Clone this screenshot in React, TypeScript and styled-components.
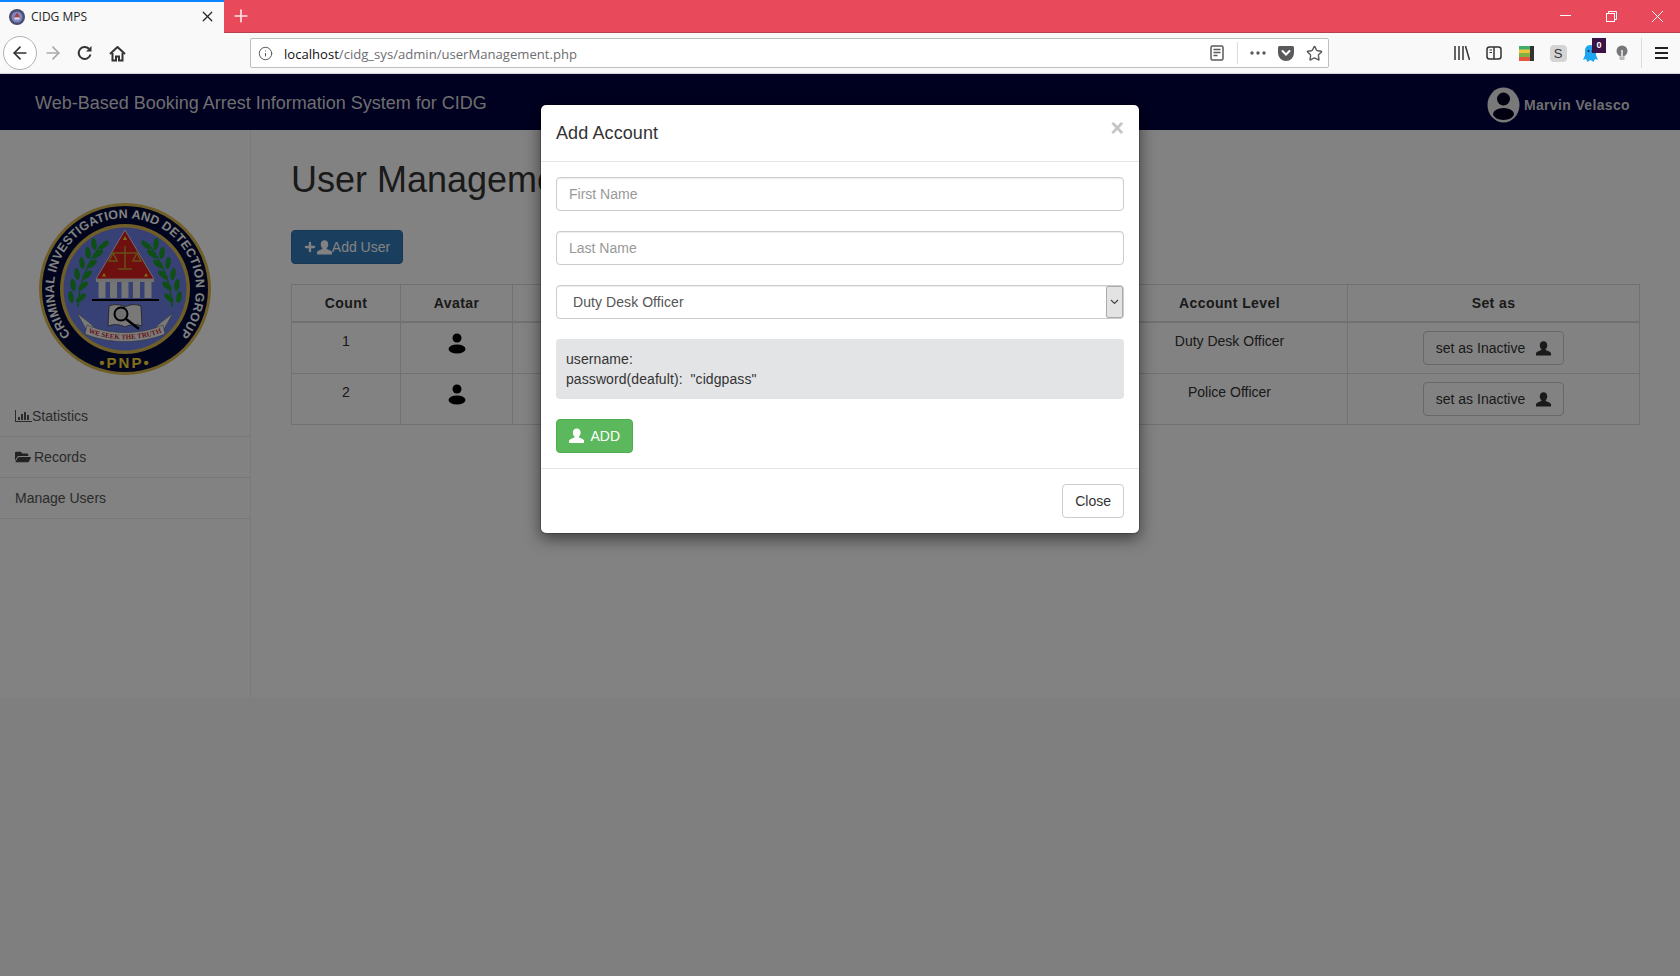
import React from "react";
import styled, { createGlobalStyle } from "styled-components";
import { ArrowLeft, ArrowRight, Info, Star, X, Plus } from "lucide-react";
import { FaFolderOpen } from "react-icons/fa";

const GlobalStyle = createGlobalStyle`
  html, body {
    margin: 0;
    padding: 0;
    height: 100%;
  }
  body {
    font-family: "Liberation Sans", Arial, sans-serif;
    font-size: 14px;
    line-height: 20px;
    color: #333;
    background: #fff;
  }
  * {
    box-sizing: border-box;
  }
`;

const Frame = styled.div`
  width: 1680px;
  height: 976px;
  display: flex;
  flex-direction: column;
  overflow: hidden;
`;

/* Browser chrome */
const TabStrip = styled.div`
  height: 33px;
  display: flex;
  align-items: stretch;
  background: #e84a5b;
  border-bottom: 1px solid #b8404e;
`;

const Tab = styled.div`
  width: 224px;
  height: 33px;
  display: flex;
  align-items: center;
  padding: 0 8px 2px 9px;
  gap: 6px;
  background: #f9f9fa;
  border-top: 2px solid #0a84ff;
  font-family: "Open Sans", sans-serif;
  font-size: 12px;
  color: #222;
`;

const TabTitle = styled.span`
  flex: 1;
`;

const NewTab = styled.div`
  width: 34px;
  display: flex;
  align-items: center;
  justify-content: center;
  color: #fde3e6;
`;

const WindowControls = styled.div`
  margin-left: auto;
  display: flex;
`;

const WindowButton = styled.div`
  width: 46px;
  display: flex;
  align-items: center;
  justify-content: center;
`;

const Toolbar = styled.div`
  height: 41px;
  display: flex;
  align-items: center;
  padding: 0 3px;
  background: #f9f9fa;
  border-bottom: 1px solid #e0e0e2;
`;

const BackButton = styled.div`
  width: 34px;
  height: 34px;
  border: 1px solid #b1b1b3;
  border-radius: 50%;
  background: #fff;
  display: flex;
  align-items: center;
  justify-content: center;
  color: #303033;
`;

const Slot = styled.div<{ $w?: number; $color?: string }>`
  width: ${(p) => p.$w ?? 32}px;
  height: 32px;
  position: relative;
  display: flex;
  align-items: center;
  justify-content: center;
  color: ${(p) => p.$color ?? "#333"};
`;

const UrlBar = styled.div`
  width: 1079px;
  height: 30px;
  margin-left: 117px;
  display: flex;
  align-items: center;
  background: #fff;
  border: 1px solid #bebebf;
  border-radius: 2px;
  padding-left: 7px;
  color: #5a5a5c;
`;

const UrlText = styled.div`
  flex: 1;
  margin: 1px 0 0 11px;
  font-family: "Open Sans", sans-serif;
  font-size: 13.1px;
  color: #6d6d70;
  white-space: nowrap;
`;

const UrlHost = styled.span`
  color: #111;
`;

const Divider = styled.div<{ $h: number; $mx: number }>`
  width: 1px;
  height: ${(p) => p.$h}px;
  margin: 0 ${(p) => p.$mx}px;
  background: #dcdcde;
`;

const RightTools = styled.div`
  margin-left: 117px;
  display: flex;
  align-items: center;
`;

const Badge = styled.span`
  position: absolute;
  top: 1px;
  right: 0;
  width: 14px;
  height: 15px;
  background: #3a1245;
  color: #fff;
  font-family: "Liberation Sans", sans-serif;
  font-size: 9px;
  font-weight: 700;
  line-height: 14px;
  text-align: center;
`;

const SBox = styled.div`
  width: 17px;
  height: 17px;
  border-radius: 4px;
  background: #d4d4d5;
  color: #333;
  font-size: 13px;
  line-height: 17px;
  text-align: center;
`;

/* Page */
const Viewport = styled.div`
  position: relative;
  flex: 1;
  background: #f9f9f9;
`;

const Navbar = styled.header`
  height: 56px;
  display: flex;
  align-items: center;
  justify-content: space-between;
  padding: 0 50px 0 35px;
  background: #000040;
  box-shadow: 0 1px 3px rgba(0, 0, 0, 0.3);
`;

const Brand = styled.div`
  font-size: 18px;
  color: #d8d8d8;
  margin-top: 2px;
`;

const UserInfo = styled.div`
  display: flex;
  align-items: center;
  gap: 4px;
  margin-top: 6px;
  font-weight: 700;
  font-size: 14px;
  letter-spacing: 0.35px;
  color: #d8d8d8;
`;

const Body = styled.div`
  height: 568px;
  display: flex;
  background: #fff;
`;

const Sidebar = styled.aside`
  width: 251px;
  flex: none;
  border-right: 1px solid #eee;
`;

const LogoWrap = styled.div`
  display: flex;
  justify-content: center;
  padding: 73px 0 21px;
`;

const SideItem = styled.div<{ $gap?: number }>`
  height: 41px;
  padding: 10px 15px;
  display: flex;
  align-items: center;
  gap: ${(p) => p.$gap ?? 0}px;
  border-bottom: 1px solid #e7e7e7;
  color: #555;
`;

const Main = styled.main`
  flex: 1;
  padding: 30px 41px 0 40px;
`;

const Title = styled.h1`
  margin: 0 0 30px;
  font-size: 36px;
  line-height: 40px;
  font-weight: 500;
  color: #333;
`;

const PrimaryButton = styled.button`
  height: 34px;
  width: 112px;
  display: flex;
  align-items: center;
  justify-content: center;
  padding: 0 1px 0 0;
  margin-bottom: 20px;
  border: 1px solid #2e6da4;
  border-radius: 4px;
  background: #337ab7;
  color: #fff;
  font: inherit;
`;

const Table = styled.table`
  width: 1348px;
  table-layout: fixed;
  border-collapse: collapse;
`;

const Th = styled.th<{ $w: number }>`
  width: ${(p) => p.$w}px;
  padding: 8px;
  border: 1px solid #ddd;
  border-bottom-width: 2px;
  text-align: center;
  letter-spacing: 0.4px;
`;

const Td = styled.td`
  height: 51px;
  padding: 8px;
  border: 1px solid #ddd;
  text-align: center;
  vertical-align: top;
`;

const DefaultButton = styled.button`
  height: 34px;
  display: inline-flex;
  align-items: center;
  vertical-align: top;
  gap: 11px;
  padding: 0 12px;
  border: 1px solid #ccc;
  border-radius: 4px;
  background: #fff;
  color: #333;
  font: inherit;
`;

/* Modal */
const Backdrop = styled.div`
  position: absolute;
  inset: 0;
  display: flex;
  justify-content: center;
  align-items: flex-start;
  padding-top: 30px;
  background: rgba(0, 0, 0, 0.49);
`;

const Modal = styled.div`
  width: 600px;
  background: #fff;
  border: 1px solid rgba(0, 0, 0, 0.2);
  border-radius: 6px;
  background-clip: padding-box;
  box-shadow: 0 5px 15px rgba(0, 0, 0, 0.5);
`;

const ModalHeader = styled.div`
  height: 57px;
  padding: 15px;
  display: flex;
  justify-content: space-between;
  border-bottom: 1px solid #e5e5e5;
`;

const ModalTitle = styled.h4`
  margin: 0;
  font-size: 18px;
  line-height: 26px;
  font-weight: 500;
  letter-spacing: 0.1px;
  color: #333;
`;

const CloseX = styled.span`
  margin-top: -2px;
  font-size: 23px;
  font-weight: 700;
  line-height: 21px;
  color: #c4c4c4;
`;

const ModalBody = styled.div`
  padding: 15px;
  display: flex;
  flex-direction: column;
  align-items: flex-start;
  gap: 20px;
`;

const Input = styled.input`
  width: 100%;
  height: 34px;
  padding: 6px 12px;
  border: 1px solid #ccc;
  border-radius: 4px;
  background: #fff;
  box-shadow: inset 0 1px 1px rgba(0, 0, 0, 0.075);
  font: inherit;
  color: #555;
  outline: none;

  &::placeholder {
    color: #999;
    opacity: 1;
  }
`;

const SelectWrap = styled.div`
  position: relative;
  width: 100%;
`;

const Select = styled.select`
  width: 100%;
  height: 34px;
  padding: 6px 12px 6px 16px;
  border: 1px solid #ccc;
  border-radius: 4px;
  background: #fff;
  box-shadow: inset 0 1px 1px rgba(0, 0, 0, 0.075);
  appearance: none;
  font: inherit;
  letter-spacing: 0.07px;
  color: #555;
  outline: none;
`;

const SelectArrow = styled.span`
  position: absolute;
  top: 1px;
  right: 1px;
  width: 17px;
  height: 32px;
  display: flex;
  align-items: center;
  justify-content: center;
  border: 1px solid #ababab;
  border-radius: 2px;
  background: #e3e3e3;
  pointer-events: none;
`;

const Well = styled.div`
  width: 100%;
  height: 60px;
  padding: 10px;
  border-radius: 4px;
  background: #e3e4e6;
  color: #333;
  letter-spacing: 0.08px;
`;

const SuccessButton = styled.button`
  height: 34px;
  width: 77px;
  display: flex;
  align-items: center;
  gap: 6px;
  padding: 0 12px;
  border: 1px solid #4cae4c;
  border-radius: 4px;
  background: #5cb85c;
  color: #fff;
  font: inherit;
`;

const ModalFooter = styled.div`
  padding: 15px;
  display: flex;
  justify-content: flex-end;
  border-top: 1px solid #e5e5e5;
`;

const CloseButton = styled.button`
  height: 34px;
  padding: 0 12px;
  border: 1px solid #ccc;
  border-radius: 4px;
  background: #fff;
  color: #333;
  font: inherit;
`;

/* Drawings */
const GlyphUser = ({ size = 14, color = "currentColor" }: { size?: number; color?: string }) => (
  <svg width={size} height={size} viewBox="0 0 24 24" fill={color}>
    <path d="M12 0.5c-4 0-6 3-6 6.500 0 2.400 1 4.500 2.600 5.800v1.200c0 1.200-6.600 1.800-8.600 5.400V23h24v-3.600c-2-3.600-8.600-4.200-8.600-5.400v-1.200C17 11.500 18 9.400 18 7c0-3.500-2-6.500-6-6.500z" />
  </svg>
);

const AvatarGlyph = () => (
  <svg width="20" height="22" viewBox="0 0 20 22" fill="#000" style={{ display: "block", margin: "2px auto 0" }}>
    <circle cx="10" cy="5" r="4.500" />
    <ellipse cx="10" cy="16" rx="8.500" ry="4.500" />
  </svg>
);

const NavAvatar = () => (
  <svg width="33" height="36" viewBox="0 0 33 36">
    <ellipse cx="16.500" cy="18" rx="16" ry="17.500" fill="#eee" />
    <circle cx="16.500" cy="12" r="6.500" fill="#000020" />
    <ellipse cx="16.500" cy="27" rx="10.500" ry="6" fill="#000020" />
  </svg>
);

const ChartIcon = () => (
  <svg width="17" height="14" viewBox="0 0 17 14" fill="#555">
    <path d="M0 1h1v11h16v1H0z" />
    <path d="M3 8h2v3H3zM6 5h2v6H6zM9 3h2v8H9zM12 6h2v5h-2z" />
  </svg>
);

const ReloadIcon = () => (
  <svg width="16" height="16" viewBox="0 0 16 16" fill="none" stroke="#333" strokeWidth="2">
    <path d="M13.500 9.500A6 6 0 1 1 12 3.800" />
    <path d="M14.500 1v5.500H9" fill="#333" stroke="none" />
  </svg>
);

const HomeIcon = () => (
  <svg width="17" height="17" viewBox="0 0 17 17" fill="none" stroke="#333" strokeWidth="2">
    <path d="M1 9l7.500-7 7.500 7" strokeLinejoin="round" />
    <path d="M3.500 8v7.500h3.500v-4h3v4h3.500V8" />
  </svg>
);

const ReaderIcon = () => (
  <svg width="14" height="16" viewBox="0 0 14 16" fill="none" stroke="#5a5a5c" strokeWidth="1.500">
    <rect x="1" y="1" width="12" height="14" rx="1.500" />
    <path d="M3.500 4.500h7M3.500 7.500h7M3.500 10.500h4" />
  </svg>
);

const DotsIcon = () => (
  <svg width="16" height="4" viewBox="0 0 16 4" fill="#5a5a5c">
    <circle cx="2" cy="2" r="1.700" />
    <circle cx="8" cy="2" r="1.700" />
    <circle cx="14" cy="2" r="1.700" />
  </svg>
);

const PocketIcon = () => (
  <svg width="16" height="15" viewBox="0 0 16 15">
    <path d="M1.500 0h13A1.500 1.500 0 0 1 16 1.500V7a8 8 0 0 1-16 0V1.500A1.500 1.500 0 0 1 1.500 0z" fill="#5a5a5c" />
    <path d="M4.500 5L8 8.500 11.500 5" fill="none" stroke="#fff" strokeWidth="2" strokeLinecap="round" />
  </svg>
);

const LibraryIcon = () => (
  <svg width="16" height="14" viewBox="0 0 16 14" fill="none" stroke="#333" strokeWidth="1.500">
    <path d="M1 0v14M5 0v14M9 0v14M11.500 0l4 14" />
  </svg>
);

const SidebarIcon = () => (
  <svg width="16" height="14" viewBox="0 0 16 14" fill="none" stroke="#333" strokeWidth="1.500">
    <rect x="1" y="1" width="14" height="12" rx="2.500" />
    <path d="M8 1v12" />
    <path d="M3.500 4h2.500M3.500 6.500h2.500" strokeWidth="1" />
  </svg>
);

const StackIcon = () => (
  <svg width="15" height="15" viewBox="0 0 15 15">
    <rect width="12" height="4" fill="#3fae6a" />
    <rect y="3.500" width="12" height="4" fill="#f0c33c" />
    <rect y="7" width="12" height="4" fill="#7cb342" />
    <rect y="11" width="12" height="4" fill="#e8553e" />
    <rect x="11" width="4" height="15" fill="#333" />
  </svg>
);

const GhostIcon = () => (
  <svg width="15" height="17" viewBox="0 0 15 17">
    <path d="M7.500 0C3.500 0 2 3 2 6v4l-2 5 3-1 1.500 3 3-2 3 2 1.500-3 3 1-2-5V6c0-3-1.500-6-5.500-6z" fill="#1ea5f2" />
    <circle cx="5.500" cy="6" r="1" fill="#123" />
    <circle cx="9.500" cy="6" r="1" fill="#123" />
  </svg>
);

const BulbIcon = () => (
  <svg width="12" height="16" viewBox="0 0 12 16">
    <circle cx="6" cy="6" r="5.500" fill="#77777a" />
    <rect x="3.500" y="11" width="5" height="4" fill="#b9b9bb" />
    <rect x="5" y="5" width="2" height="7" fill="#d5d5d6" />
  </svg>
);

const MenuIcon = () => (
  <svg width="13" height="12" viewBox="0 0 13 12" fill="#222">
    <rect width="13" height="2" />
    <rect y="5" width="13" height="2" />
    <rect y="10" width="13" height="2" />
  </svg>
);

const SmallSeal = () => (
  <svg width="16" height="16" viewBox="0 0 16 16">
    <circle cx="8" cy="8" r="8" fill="#4a4d6e" />
    <circle cx="8" cy="8" r="5.500" fill="#7d87c4" />
    <path d="M8 3.500l3 5H5z" fill="#b03a3a" />
    <rect x="5.500" y="8.500" width="5" height="2" fill="#ddd" />
  </svg>
);

// laurel stem points on the left branch, mirrored for the right one
const laurel = [
  [37, 96],
  [39, 84],
  [43, 73],
  [48, 62],
  [54, 52],
  [60, 43],
];

const Leaf = ({ x, y, angle }: { x: number; y: number; angle: number }) => (
  <ellipse cx={x} cy={y} rx="2.700" ry="6" fill="#1e9a2e" transform={`rotate(${angle} ${x} ${y})`} />
);

const Seal = () => (
  <svg width="172" height="172" viewBox="0 0 172 172" aria-label="CIDG seal">
    <defs>
      <path id="topArc" d="M42.300 142A71 71 0 1 1 129.700 142" />
      <path id="mottoArc" d="M46 128c24 11 56 11 80 0" fill="none" />
    </defs>
    <circle cx="86" cy="86" r="86" fill="#d9b84e" />
    <circle cx="86" cy="86" r="83" fill="#000a3a" />
    <circle cx="86" cy="86" r="65" fill="#d9b84e" />
    <circle cx="86" cy="86" r="61.500" fill="#6c80e6" />
    <text fontFamily="Liberation Sans, sans-serif" fontWeight="700" fontSize="12.400" fill="#fff" letterSpacing="0.200">
      <textPath href="#topArc" startOffset="50%" textAnchor="middle">
        CRIMINAL INVESTIGATION AND DETECTION GROUP
      </textPath>
    </text>
    <text x="86" y="165" textAnchor="middle" fontFamily="Liberation Sans, sans-serif" fontWeight="700" fontSize="15" fill="#fdd835" letterSpacing="2">
      •PNP•
    </text>
    {laurel.map(([x, y]) => (
      <g key={y}>
        <Leaf x={x - 5} y={y - 2} angle={-8} />
        <Leaf x={x + 5} y={y - 1} angle={50} />
        <Leaf x={172 - x + 5} y={y - 2} angle={8} />
        <Leaf x={172 - x - 5} y={y - 1} angle={-50} />
      </g>
    ))}
    <path d="M39 104C40 80 48 60 62 42M133 104C132 80 124 60 110 42" fill="none" stroke="#1e9a2e" strokeWidth="1.500" />
    <path d="M86 27l29 49H57z" fill="#d92020" stroke="#eee" strokeWidth="0.800" />
    <path d="M86 33l2 4h-4zM65 70l2 3.500h-4zM107 70l2 3.500h-4z" fill="#fdd835" />
    <path d="M86 43v22M74 50h24M74 50l-4 8h8zM98 50l-4 8h8zM79 66h14" stroke="#c79a2b" strokeWidth="1.500" fill="none" />
    <rect x="57" y="76" width="58" height="3" fill="#ddd" />
    {[63, 74.500, 86, 97.500, 109].map((x) => (
      <rect key={x} x={x - 3.500} y="79" width="7" height="16" fill="#e6e6e6" />
    ))}
    <rect x="53" y="96" width="67" height="2" fill="#000" />
    <path d="M70 103c5-2 11-2 16 1 5-3 11-3 16-1l1 20c-6-2-11-2-17 1-6-3-11-3-17-1z" fill="#eee" stroke="#555" />
    <circle cx="82" cy="111" r="6.500" fill="#dcdcdc" stroke="#000" strokeWidth="2" />
    <path d="M87 116l13 10" stroke="#000" strokeWidth="2.500" />
    <path d="M38 110l14 11 9 10-13-3zM134 110l-14 11-9 10 13-3z" fill="#eee" stroke="#555" strokeWidth="0.500" />
    <path d="M48 122c22 10 54 10 76 0l2 9c-24 10-56 10-80 0z" fill="#f4f4f4" stroke="#555" strokeWidth="0.500" />
    <text fontFamily="Liberation Serif, serif" fontWeight="700" fontSize="7" fill="#c62828">
      <textPath href="#mottoArc" startOffset="50%" textAnchor="middle">
        WE SEEK THE TRUTH
      </textPath>
    </text>
  </svg>
);

const users = [
  { count: 1, level: "Duty Desk Officer" },
  { count: 2, level: "Police Officer" },
];

const App: React.FC = () => {
  return (
    <Frame>
      <GlobalStyle />
      <TabStrip>
        <Tab>
          <SmallSeal />
          <TabTitle>CIDG MPS</TabTitle>
          <X size={17} strokeWidth={1.8} color="#222" />
        </Tab>
        <NewTab>
          <Plus size={20} strokeWidth={2} />
        </NewTab>
        <WindowControls>
          <WindowButton>
            <svg width="11" height="2" viewBox="0 0 11 2" fill="#fff">
              <rect width="11" height="1" />
            </svg>
          </WindowButton>
          <WindowButton>
            <svg width="11" height="11" viewBox="0 0 11 11" fill="none" stroke="#fff">
              <rect x="0.500" y="2.500" width="8" height="8" />
              <path d="M2.500 2.500v-2h8v8h-2" />
            </svg>
          </WindowButton>
          <WindowButton>
            <svg width="11" height="11" viewBox="0 0 11 11" stroke="#fff">
              <path d="M0 0l11 11M11 0L0 11" />
            </svg>
          </WindowButton>
        </WindowControls>
      </TabStrip>

      <Toolbar>
        <BackButton>
          <ArrowLeft size={20} strokeWidth={2} />
        </BackButton>
        <Slot $color="#a9a9ab">
          <ArrowRight size={20} strokeWidth={2} />
        </Slot>
        <Slot>
          <ReloadIcon />
        </Slot>
        <Slot>
          <HomeIcon />
        </Slot>
        <UrlBar>
          <Info size={15} strokeWidth={1.6} />
          <UrlText>
            <UrlHost>localhost</UrlHost>/cidg_sys/admin/userManagement.php
          </UrlText>
          <Slot $w={28}>
            <ReaderIcon />
          </Slot>
          <Divider $h={22} $mx={6} />
          <Slot $w={28}>
            <DotsIcon />
          </Slot>
          <Slot $w={28}>
            <PocketIcon />
          </Slot>
          <Slot $w={28} $color="#5a5a5c">
            <Star size={17} strokeWidth={2} />
          </Slot>
        </UrlBar>
        <RightTools>
          <Slot>
            <LibraryIcon />
          </Slot>
          <Slot>
            <SidebarIcon />
          </Slot>
          <Slot>
            <StackIcon />
          </Slot>
          <Slot>
            <SBox>S</SBox>
          </Slot>
          <Slot>
            <GhostIcon />
            <Badge>0</Badge>
          </Slot>
          <Slot>
            <BulbIcon />
          </Slot>
          <Divider $h={30} $mx={3} />
          <Slot>
            <MenuIcon />
          </Slot>
        </RightTools>
      </Toolbar>

      <Viewport>
        <Navbar>
          <Brand>Web-Based Booking Arrest Information System for CIDG</Brand>
          <UserInfo>
            <NavAvatar />
            Marvin Velasco
          </UserInfo>
        </Navbar>
        <Body>
          <Sidebar>
            <LogoWrap>
              <Seal />
            </LogoWrap>
            <SideItem $gap={0}>
              <ChartIcon />
              Statistics
            </SideItem>
            <SideItem $gap={3}>
              <FaFolderOpen size={16} color="#444" />
              Records
            </SideItem>
            <SideItem>Manage Users</SideItem>
          </Sidebar>
          <Main>
            <Title>User Management</Title>
            <PrimaryButton>
              <Plus size={14} strokeWidth={4} />
              <GlyphUser size={15} />
              Add User
            </PrimaryButton>
            <Table>
              <thead>
                <tr>
                  <Th $w={109}>Count</Th>
                  <Th $w={112}>Avatar</Th>
                  <Th $w={599}>Name</Th>
                  <Th $w={236}>Account Level</Th>
                  <Th $w={292}>Set as</Th>
                </tr>
              </thead>
              <tbody>
                {users.map((user) => (
                  <tr key={user.count}>
                    <Td>{user.count}</Td>
                    <Td>
                      <AvatarGlyph />
                    </Td>
                    <Td />
                    <Td>{user.level}</Td>
                    <Td>
                      <DefaultButton>
                        set as Inactive
                        <GlyphUser size={15} />
                      </DefaultButton>
                    </Td>
                  </tr>
                ))}
              </tbody>
            </Table>
          </Main>
        </Body>

        <Backdrop>
          <Modal>
            <ModalHeader>
              <ModalTitle>Add Account</ModalTitle>
              <CloseX>×</CloseX>
            </ModalHeader>
            <ModalBody>
              <Input placeholder="First Name" />
              <Input placeholder="Last Name" />
              <SelectWrap>
                <Select defaultValue="Duty Desk Officer">
                  <option>Duty Desk Officer</option>
                  <option>Police Officer</option>
                </Select>
                <SelectArrow>
                  <svg width="9" height="6" viewBox="0 0 9 6" fill="none" stroke="#444" strokeWidth="1.200">
                    <path d="M1 1l3.500 3.500L8 1" />
                  </svg>
                </SelectArrow>
              </SelectWrap>
              <Well>
                username:
                <br />
                password(deafult):&nbsp; "cidgpass"
              </Well>
              <SuccessButton>
                <GlyphUser size={16} />
                ADD
              </SuccessButton>
            </ModalBody>
            <ModalFooter>
              <CloseButton>Close</CloseButton>
            </ModalFooter>
          </Modal>
        </Backdrop>
      </Viewport>
    </Frame>
  );
};

export default App;
